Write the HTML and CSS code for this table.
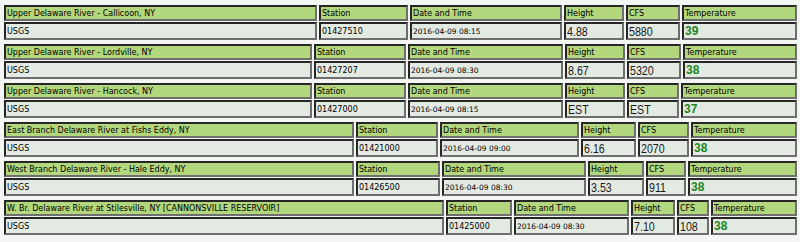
FILE: index.html
```html
<!DOCTYPE html>
<html>
<head>
<meta charset="utf-8">
<title>River Gauges</title>
<link rel="stylesheet" href="styles.css">
</head>
<body>
<div class="page">
  <div class="gauge t1">
    <div class="h">Upper Delaware River - Callicoon, NY</div>
    <div class="h">Station</div>
    <div class="h">Date and Time</div>
    <div class="h">Height</div>
    <div class="h">CFS</div>
    <div class="h">Temperature</div>
    <div class="d">USGS</div>
    <div class="d">01427510</div>
    <div class="d date">2016-04-09 08:15</div>
    <div class="d num"><span>4.88</span></div>
    <div class="d num"><span>5880</span></div>
    <div class="d temp">39</div>
  </div>
  <div class="gauge t2">
    <div class="h">Upper Delaware River - Lordville, NY</div>
    <div class="h">Station</div>
    <div class="h">Date and Time</div>
    <div class="h">Height</div>
    <div class="h">CFS</div>
    <div class="h">Temperature</div>
    <div class="d">USGS</div>
    <div class="d">01427207</div>
    <div class="d date">2016-04-09 08:30</div>
    <div class="d num"><span>8.67</span></div>
    <div class="d num"><span>5320</span></div>
    <div class="d temp">38</div>
  </div>
  <div class="gauge t3">
    <div class="h">Upper Delaware River - Hancock, NY</div>
    <div class="h">Station</div>
    <div class="h">Date and Time</div>
    <div class="h">Height</div>
    <div class="h">CFS</div>
    <div class="h">Temperature</div>
    <div class="d">USGS</div>
    <div class="d">01427000</div>
    <div class="d date">2016-04-09 08:15</div>
    <div class="d num"><span>EST</span></div>
    <div class="d num"><span>EST</span></div>
    <div class="d temp">37</div>
  </div>
  <div class="gauge t4">
    <div class="h">East Branch Delaware River at Fishs Eddy, NY</div>
    <div class="h">Station</div>
    <div class="h">Date and Time</div>
    <div class="h">Height</div>
    <div class="h">CFS</div>
    <div class="h">Temperature</div>
    <div class="d">USGS</div>
    <div class="d">01421000</div>
    <div class="d date">2016-04-09 09:00</div>
    <div class="d num"><span>6.16</span></div>
    <div class="d num"><span>2070</span></div>
    <div class="d temp">38</div>
  </div>
  <div class="gauge t5">
    <div class="h">West Branch Delaware River - Hale Eddy, NY</div>
    <div class="h">Station</div>
    <div class="h">Date and Time</div>
    <div class="h">Height</div>
    <div class="h">CFS</div>
    <div class="h">Temperature</div>
    <div class="d">USGS</div>
    <div class="d">01426500</div>
    <div class="d date">2016-04-09 08:30</div>
    <div class="d num"><span>3.53</span></div>
    <div class="d num"><span>911</span></div>
    <div class="d temp">38</div>
  </div>
  <div class="gauge t6">
    <div class="h">W. Br. Delaware River at Stilesville, NY [CANNONSVILLE RESERVOIR]</div>
    <div class="h">Station</div>
    <div class="h">Date and Time</div>
    <div class="h">Height</div>
    <div class="h">CFS</div>
    <div class="h">Temperature</div>
    <div class="d">USGS</div>
    <div class="d">01425000</div>
    <div class="d date">2016-04-09 08:30</div>
    <div class="d num"><span>7.10</span></div>
    <div class="d num"><span>108</span></div>
    <div class="d temp">38</div>
  </div>
</div>
</body>
</html>
```

FILE: styles.css
```css
html, body {
  margin: 0;
  padding: 0;
  background: #f3f6f2;
}

.page {
  padding: 5px 3px 0 4px;
  display: flex;
  flex-direction: column;
  gap: 4px;
  font-family: "DejaVu Sans", Verdana, sans-serif;
  font-size: 8px;
  color: #000;
}

.gauge {
  display: grid;
  grid-template-rows: 16px 18px;
  column-gap: 2px;
  row-gap: 1px;
}

.t1 { grid-template-columns: 313px 89px 152px 60px 54px 115px; }
.t2 { grid-template-columns: 308px 92px 155px 60px 54px 114px; }
.t3 { grid-template-columns: 308px 92px 155px 60px 52px 116px; }
.t4 { grid-template-columns: 350px 82px 139px 55px 51px 106px; }
.t5 { grid-template-columns: 350px 84px 144px 56px 40px 109px; }
.t6 { grid-template-columns: 440px 66px 115px 44px 32px 86px; }

.h, .d {
  box-sizing: border-box;
  border-style: solid;
  border-width: 2px;
  border-color: #262626 #6e6e6e #6e6e6e #262626;
  padding: 0 1px;
  display: flex;
  align-items: center;
  white-space: nowrap;
  overflow: hidden;
}

.h {
  background: #b2d77d;
}

.d {
  background: #e3eae2;
}

.date {
  font-size: 7.5px;
}

.num {
  font-family: "Liberation Sans", Arial, sans-serif;
  font-size: 13px;
  color: #1a1a1a;
}

.num span {
  display: inline-block;
  transform: scaleX(0.82);
  transform-origin: left center;
}

.temp {
  font-family: "Liberation Sans", Arial, sans-serif;
  font-size: 12px;
  font-weight: bold;
  color: #1d861d;
}
```
